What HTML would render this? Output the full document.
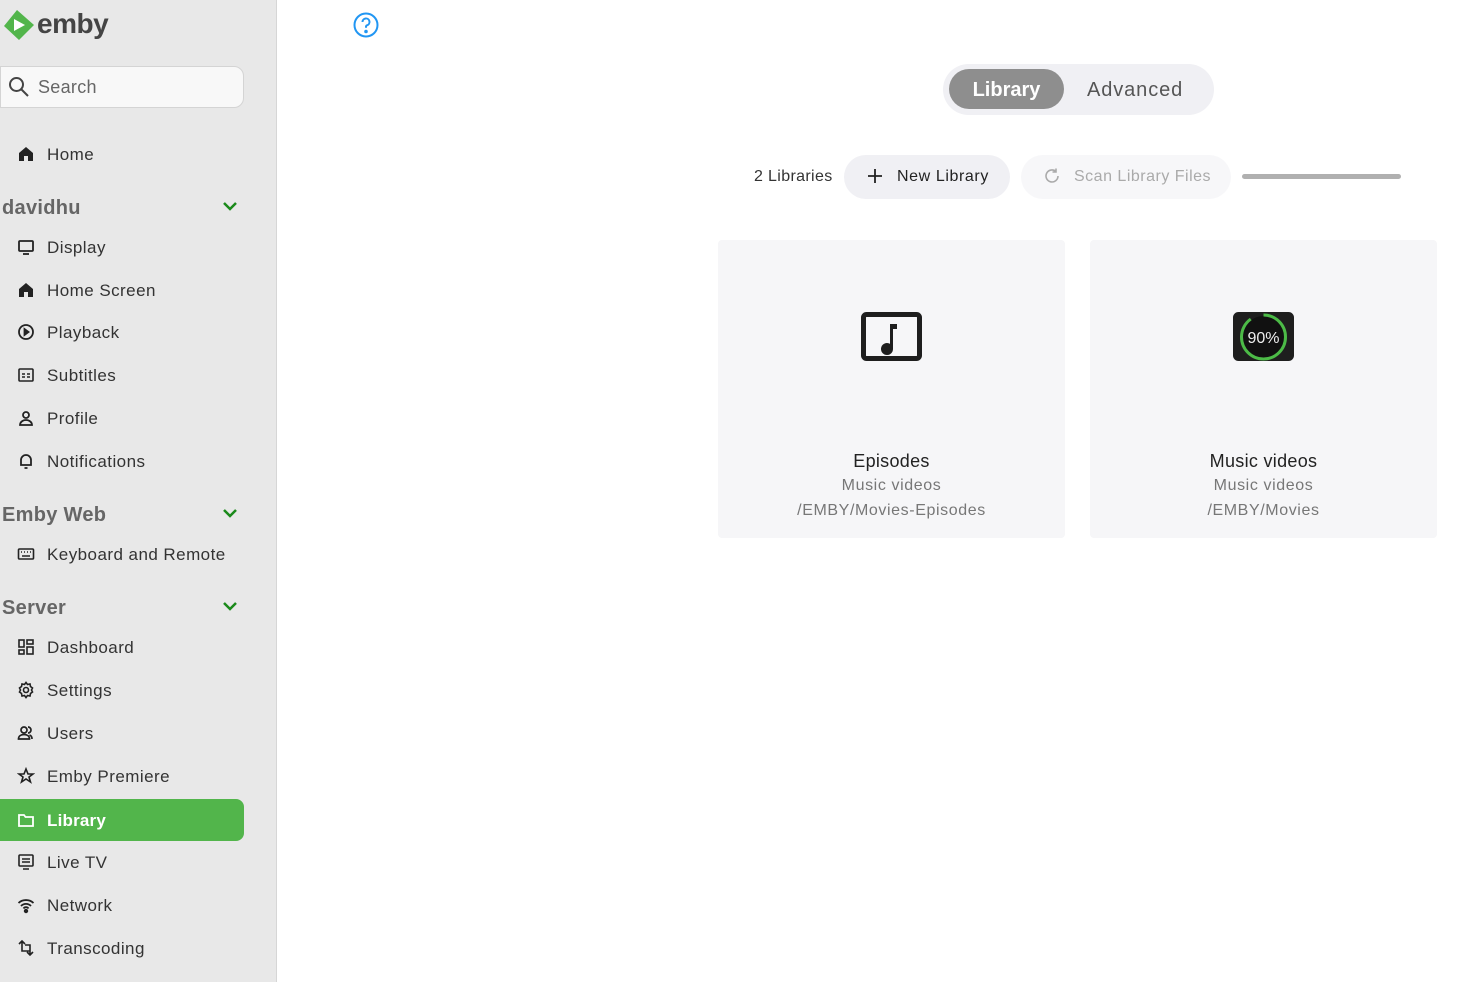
<!DOCTYPE html>
<html><head><meta charset="utf-8"><style>
*{margin:0;padding:0;box-sizing:border-box}
body{width:1469px;height:982px;background:#fff;font-family:"Liberation Sans",sans-serif;position:relative;overflow:hidden;color:#222}
#sb{position:absolute;left:0;top:0;width:277px;height:982px;background:#e8e8e8;border-right:1px solid #d6d6d6}
.it{position:absolute;left:0;width:244px;height:42px;line-height:44px;font-size:17px;letter-spacing:.45px;color:#333;padding-left:47px}
.it svg{position:absolute;left:17px;top:12px;width:18px;height:18px}
.hd{position:absolute;left:2px;width:242px;height:30px;line-height:32px;font-size:20px;font-weight:bold;color:#666;letter-spacing:.3px}
.hd svg{position:absolute;right:6px;top:8px}
.act{background:#52b54b;color:#fff;border-radius:0 8px 8px 0}
.card{position:absolute;top:240px;width:347px;height:298px;background:#f6f6f8;border-radius:4px;text-align:center}
.card .t{position:absolute;top:211px;width:100%;font-size:18px;color:#222;letter-spacing:.3px}
.card .s{position:absolute;width:100%;font-size:16px;color:#777;letter-spacing:.6px}
</style></head><body>
<div id="sb">
<svg style="position:absolute;left:3px;top:9px" width="32" height="32" viewBox="0 0 32 32"><path d="M14 1 L31 16 L16 31 L1 17 Z" fill="#52b54b"/><path d="M11 10 L22 16 L11 22Z" fill="#fff"/></svg>
<div style="position:absolute;left:37px;top:8px;font-size:28px;font-weight:bold;color:#444;letter-spacing:-0.5px">emby</div>
<div style="position:absolute;left:0;top:66px;width:244px;height:42px;background:#f8f8f8;border:1px solid #d4d4d4;border-radius:0 10px 10px 0"></div>
<svg style="position:absolute;left:8px;top:76px" width="22" height="22" viewBox="0 0 22 22" fill="none" stroke="#444" stroke-width="2"><circle cx="8.5" cy="8.5" r="6.5"/><path d="M13 13l7 7"/></svg>
<div style="position:absolute;left:38px;top:77px;font-size:18px;color:#666;letter-spacing:.3px">Search</div>

<div class="it" style="top:133px"><svg viewBox="0 0 18 18"><path d="M2 8L9 2l7 6v8h-5v-5H7v5H2z" fill="#222"/></svg>Home</div>
<div class="hd" style="top:192px">davidhu<svg width="16" height="12" viewBox="0 0 16 12"><path d="M2 3l6 6 6-6" stroke="#1a8a1a" stroke-width="2.5" fill="none"/></svg></div>
<div class="it" style="top:226px"><svg viewBox="0 0 18 18" fill="none" stroke="#222" stroke-width="1.8"><rect x="2" y="3" width="14" height="10" rx="1"/><path d="M6 16h6"/></svg>Display</div>
<div class="it" style="top:269px"><svg viewBox="0 0 18 18"><path d="M2 8L9 2l7 6v8h-5v-5H7v5H2z" fill="#222"/></svg>Home Screen</div>
<div class="it" style="top:311px"><svg viewBox="0 0 18 18" fill="none" stroke="#222" stroke-width="1.8"><circle cx="9" cy="9" r="7"/><path d="M7.5 6v6l4-3z" fill="#222"/></svg>Playback</div>
<div class="it" style="top:354px"><svg viewBox="0 0 18 18" fill="none" stroke="#222" stroke-width="1.6"><rect x="2" y="3" width="14" height="12" rx="1"/><path d="M5 8h3M10 8h3M5 11h3M10 11h3"/></svg>Subtitles</div>
<div class="it" style="top:397px"><svg viewBox="0 0 18 18" fill="none" stroke="#222" stroke-width="1.8"><circle cx="9" cy="6" r="3"/><path d="M3 16c0-3 3-5 6-5s6 2 6 5z"/></svg>Profile</div>
<div class="it" style="top:440px"><svg viewBox="0 0 18 18" fill="none" stroke="#222" stroke-width="1.8"><path d="M4 13V8a5 5 0 0 1 10 0v5H4zM7.5 16h3"/></svg>Notifications</div>
<div class="hd" style="top:499px">Emby Web<svg width="16" height="12" viewBox="0 0 16 12"><path d="M2 3l6 6 6-6" stroke="#1a8a1a" stroke-width="2.5" fill="none"/></svg></div>
<div class="it" style="top:533px"><svg viewBox="0 0 18 18" fill="none" stroke="#222" stroke-width="1.6"><rect x="1.5" y="4" width="15" height="10" rx="1"/><path d="M4 7h1M7 7h1M10 7h1M13 7h1M5 11h8"/></svg>Keyboard and Remote</div>
<div class="hd" style="top:592px">Server<svg width="16" height="12" viewBox="0 0 16 12"><path d="M2 3l6 6 6-6" stroke="#1a8a1a" stroke-width="2.5" fill="none"/></svg></div>
<div class="it" style="top:626px"><svg viewBox="0 0 18 18" fill="none" stroke="#222" stroke-width="1.6"><rect x="2" y="2" width="5" height="7"/><rect x="10" y="2" width="6" height="4"/><rect x="2" y="12" width="5" height="4"/><rect x="10" y="9" width="6" height="7"/></svg>Dashboard</div>
<div class="it" style="top:669px"><svg viewBox="0 0 18 18" fill="none" stroke="#222" stroke-width="1.6"><circle cx="9" cy="9" r="2.5"/><path d="M9 1.5l1.5 2 2.5-.5.5 2.5 2 1.5-1 2 1 2-2 1.5-.5 2.5-2.5-.5L9 16.5l-1.5-2-2.5.5-.5-2.5-2-1.5 1-2-1-2 2-1.5.5-2.5 2.5.5z"/></svg>Settings</div>
<div class="it" style="top:712px"><svg viewBox="0 0 18 18" fill="none" stroke="#222" stroke-width="1.7"><circle cx="7" cy="6" r="3"/><path d="M1.5 15c0-3 2.5-4.5 5.5-4.5s5.5 1.5 5.5 4.5zM11 3a3 3 0 0 1 0 6M15 15c0-2-1-3.5-2.5-4"/></svg>Users</div>
<div class="it" style="top:755px"><svg viewBox="0 0 18 18" fill="none" stroke="#222" stroke-width="1.6"><path d="M9 2l2 5h5l-4 3 1.5 5L9 12l-4.5 3L6 10 2 7h5z"/></svg>Emby Premiere</div>
<div class="it act" style="top:799px;font-weight:bold;letter-spacing:.2px"><svg viewBox="0 0 18 18" fill="none" stroke="#fff" stroke-width="1.8"><path d="M2 4h5l1.5 2H16v9H2z"/></svg>Library</div>
<div class="it" style="top:841px"><svg viewBox="0 0 18 18" fill="none" stroke="#222" stroke-width="1.6"><rect x="2" y="2" width="14" height="11" rx="1"/><path d="M5 6h8M5 9h8M6 16h6"/></svg>Live TV</div>
<div class="it" style="top:884px"><svg viewBox="0 0 18 18" fill="none" stroke="#222" stroke-width="1.8"><path d="M1.5 7a11 11 0 0 1 15 0M4 10a7 7 0 0 1 10 0M6.5 12.5a3 3 0 0 1 5 0"/><circle cx="9" cy="15" r="1.3" fill="#222"/></svg>Network</div>
<div class="it" style="top:927px"><svg viewBox="0 0 18 18" fill="none" stroke="#222" stroke-width="1.6"><path d="M2 5l3-3 3 3M5 2v10h8M16 13l-3 3-3-3M13 16V6H8"/></svg>Transcoding</div>
</div>

<svg style="position:absolute;left:353px;top:12px" width="26" height="26" viewBox="0 0 26 26" fill="none" stroke="#2196f3" stroke-width="2"><circle cx="13" cy="13" r="11.5"/><path d="M9.5 10a3.5 3.5 0 1 1 4.5 3.3c-.7.3-1 .8-1 1.5v1"/><circle cx="13" cy="19.5" r=".8" fill="#2196f3"/></svg>

<div style="position:absolute;left:943px;top:64px;width:271px;height:51px;background:#f0f0f4;border-radius:26px"></div>
<div style="position:absolute;left:949px;top:69px;width:115px;height:40px;background:#8e8e8e;border-radius:20px;color:#fff;font-size:20px;font-weight:bold;text-align:center;line-height:42px">Library</div>
<div style="position:absolute;left:1087px;top:69px;line-height:42px;font-size:20px;color:#555;letter-spacing:.9px">Advanced</div>

<div style="position:absolute;left:754px;top:168px;font-size:16px;color:#333;letter-spacing:.35px">2 Libraries</div>
<div style="position:absolute;left:844px;top:155px;width:166px;height:44px;background:#f0f0f4;border-radius:22px"></div>
<svg style="position:absolute;left:866px;top:167px" width="18" height="18" viewBox="0 0 18 18" stroke="#222" stroke-width="1.8"><path d="M9 2v14M2 9h14"/></svg>
<div style="position:absolute;left:897px;top:168px;font-size:16px;color:#222;letter-spacing:.6px">New Library</div>
<div style="position:absolute;left:1021px;top:155px;width:210px;height:44px;background:#f7f7f9;border-radius:22px"></div>
<svg style="position:absolute;left:1043px;top:167px" width="18" height="18" viewBox="0 0 18 18" fill="none" stroke="#aaa" stroke-width="1.6"><path d="M15 9a6 6 0 1 1-2-4.5M13 1.5v3.5h-3.5"/></svg>
<div style="position:absolute;left:1074px;top:168px;font-size:16px;color:#aaa;letter-spacing:.5px">Scan Library Files</div>
<div style="position:absolute;left:1242px;top:174px;width:159px;height:5px;background:#b0b0b0;border-radius:3px"></div>

<div class="card" style="left:718px">
<svg style="position:absolute;left:143px;top:72px" width="61" height="49" viewBox="0 0 61 49"><rect x="2.5" y="2.5" width="56" height="44" rx="3" fill="none" stroke="#1e1e1e" stroke-width="5"/><circle cx="26" cy="37" r="6" fill="#1e1e1e"/><path d="M29 37V12h7v5h-4v20z" fill="#1e1e1e"/></svg>
<div class="t">Episodes</div><div class="s" style="top:237px">Music videos</div><div class="s" style="top:262px">/EMBY/Movies-Episodes</div></div>
<div class="card" style="left:1090px">
<svg style="position:absolute;left:143px;top:72px" width="61" height="49" viewBox="0 0 61 49"><rect x="2.5" y="2.5" width="56" height="44" rx="3" fill="#1e1e1e" stroke="#1e1e1e" stroke-width="5"/><circle cx="30.5" cy="25" r="21" fill="#111"/><circle cx="30.5" cy="25" r="22" fill="none" stroke="#4cbb47" stroke-width="3" stroke-dasharray="124.4 13.8" transform="rotate(-90 30.5 25)"/><text x="30.5" y="31" text-anchor="middle" font-family="Liberation Sans" font-size="16" fill="#eee">90%</text></svg>
<div class="t">Music videos</div><div class="s" style="top:237px">Music videos</div><div class="s" style="top:262px">/EMBY/Movies</div></div>
</body></html>
